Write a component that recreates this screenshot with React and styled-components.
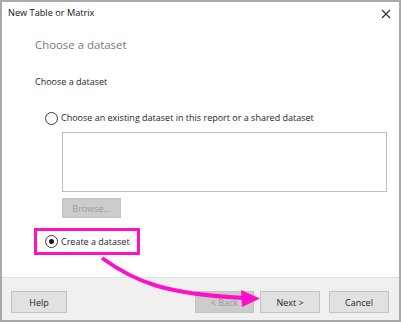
import styled, {createGlobalStyle} from "styled-components"

const GlobalStyle = createGlobalStyle`
  html, body {
    margin: 0;
    padding: 0;
    background: #ffffff;
  }
  body {
    font-family: "Open Sans", "Noto Sans", sans-serif;
    color: #1e1e1e;
  }
`

const Window = styled.div`
  position: relative;
  width: 401px;
  height: 322px;
  box-sizing: border-box;
  border: 2px solid #a9a9a9;
  background: #ffffff;
  display: flex;
  flex-direction: column;
`

const TitleBar = styled.div`
  height: 21px;
  display: flex;
  align-items: center;
  justify-content: space-between;
  padding: 0 8px 0 6px;
  font-size: 9.2px;
  color: #111;
`

const Close = styled.svg`
  width: 10px;
  height: 10px;
  margin-top: 2px;
`

const Content = styled.div`
  flex: 1;
  display: flex;
  flex-direction: column;
  padding-left: 33px;
`

const Heading = styled.div`
  margin-top: 12px;
  font-size: 11.4px;
  color: #7a7a7a;
  line-height: 20px;
`

const Label = styled.div`
  margin-top: 19px;
  font-size: 9px;
  line-height: 16px;
`

const OptionRow = styled.div`
  display: flex;
  align-items: center;
  gap: 3px;
  font-size: 9px;
  line-height: 16px;
  box-sizing: border-box;
  align-self: flex-start;
  ${(p) =>
    p.$highlighted
      ? `
    margin-left: -1px;
    width: 106px;
    height: 27px;
    padding: 0 0 0 8px;
    border: 3px solid #ff0fc8;
  `
      : `
    padding-left: 10px;
    height: 16px;
  `}
  margin-top: ${(p) => p.$top}px;
`

const Radio = styled.span`
  width: 11px;
  height: 11px;
  border-radius: 50%;
  border: 1px solid #3c3c3c;
  display: flex;
  align-items: center;
  justify-content: center;
  flex: none;

  &::after {
    content: "";
    width: 5px;
    height: 5px;
    border-radius: 50%;
    background: #1a1a1a;
    display: ${(p) => (p.$checked ? "block" : "none")};
  }
`

const ListBox = styled.div`
  margin: 6px 0 0 27px;
  width: 325px;
  height: 60px;
  box-sizing: border-box;
  border: 1px solid #bdbdbd;
`

const Button = styled.div`
  box-sizing: border-box;
  width: ${(p) => p.$width || 60}px;
  height: ${(p) => p.$height || 22}px;
  display: flex;
  align-items: center;
  justify-content: center;
  font-size: 9px;
  background: ${(p) => (p.$disabled ? "#cccccc" : "#e1e1e1")};
  border: 1px solid ${(p) => (p.$disabled ? "#c4c4c4" : "#c2c2c2")};
  color: ${(p) => (p.$disabled ? "#9a9a9a" : "#1e1e1e")};
`

const BrowseButton = styled(Button)`
  margin: 6px 0 0 27px;
`

const Footer = styled.div`
  height: 43px;
  box-sizing: border-box;
  border-top: 1px solid #dfdfdf;
  background: #f0f0f0;
  display: flex;
  align-items: flex-start;
  padding: 13px 10px 0 9px;
`

const Spacer = styled.div`
  flex: 1;
`

const ButtonGroup = styled.div`
  display: flex;
  gap: 6px;
  margin-right: 9px;
`

const Annotation = styled.svg`
  position: absolute;
  left: -2px;
  top: -2px;
  width: 401px;
  height: 322px;
  pointer-events: none;
`

export default function App() {
  return (
    <>
      <GlobalStyle />
      <Window>
        <TitleBar>
          <span>New Table or Matrix</span>
          <Close viewBox="0 0 10 10">
            <path d="M1 1 L9 9 M9 1 L1 9" stroke="#2b2b2b" strokeWidth="1.1" fill="none" />
          </Close>
        </TitleBar>
        <Content>
          <Heading>Choose a dataset</Heading>
          <Label>Choose a dataset</Label>
          <OptionRow $top={20}>
            <Radio />
            <span>Choose an existing dataset in this report or a shared dataset</span>
          </OptionRow>
          <ListBox />
          <BrowseButton $disabled $width={59} $height={20}>Browse...</BrowseButton>
          <OptionRow $top={10} $highlighted>
            <Radio $checked />
            <span>Create a dataset</span>
          </OptionRow>
        </Content>
        <Footer>
          <Button $width={56}>Help</Button>
          <Spacer />
          <ButtonGroup>
            <Button $disabled $width={59}>&lt; Back</Button>
            <Button>Next &gt;</Button>
          </ButtonGroup>
          <Button>Cancel</Button>
        </Footer>
        <Annotation viewBox="0 0 401 322">
          <path
            d="M102 258 C 135 282, 165 294, 244 298"
            stroke="#ff0fc8"
            strokeWidth="4"
            fill="none"
          />
          <polygon points="241,290 260,298.5 242,307" fill="#ff0fc8" />
        </Annotation>
      </Window>
    </>
  )
}
